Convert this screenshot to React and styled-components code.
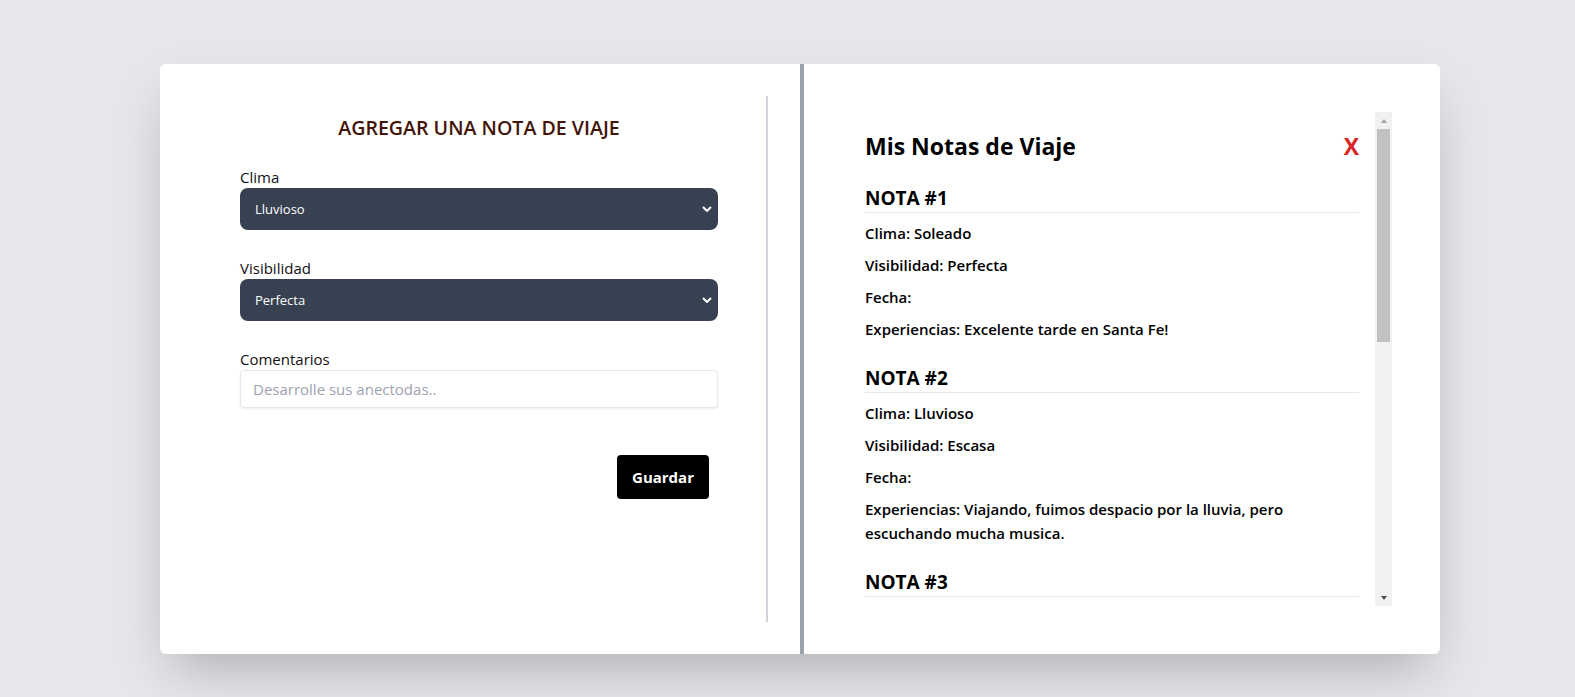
import React from 'react';
import styled, { createGlobalStyle } from 'styled-components';

const GlobalStyle = createGlobalStyle`
  * {
    box-sizing: border-box;
  }
  body {
    margin: 0;
    background-color: #e5e7eb;
    font-family: "Open Sans", "Noto Sans", sans-serif;
    color: #111827;
  }
`

const Page = styled.div`
  padding: 64px 0 0 160px;
  min-height: 697px;
`

const Card = styled.div`
  width: 1280px;
  height: 590px;
  display: grid;
  grid-template-columns: 640px 640px;
  background-color: white;
  border-radius: 6px;
  box-shadow: 0 25px 50px -12px rgba(0, 0, 0, 0.25);
`

const LeftPanel = styled.div`
  padding: 32px;
`

const FormBox = styled.form`
  height: 100%;
  border-right: 2px solid #d1d5db;
  padding: 18px 48px 0 48px;
`

const FormTitle = styled.h2`
  margin: 0 0 24px 0;
  text-align: center;
  font-size: 19.6px;
  line-height: 28px;
  font-weight: 600;
  color: #431407;
`

const Field = styled.div`
  display: flex;
  flex-direction: column;
  margin-bottom: 27px;
`

const Label = styled.label`
  font-size: 15px;
  line-height: 22px;
  color: #111;
`

const SelectWrap = styled.div`
  position: relative;
`

const Select = styled.select`
  appearance: none;
  width: 100%;
  height: 42px;
  padding: 0 15px;
  border: none;
  border-radius: 8px;
  background-color: #374151;
  color: white;
  font-family: inherit;
  font-size: 13px;
  outline: none;
`

const Chevron = styled.svg`
  position: absolute;
  right: 6px;
  top: 50%;
  transform: translateY(-50%);
  pointer-events: none;
`

const TextInput = styled.input`
  height: 38px;
  padding: 0 12px;
  border: 1px solid #e5e7eb;
  border-radius: 4px;
  box-shadow: 0 1px 2px rgba(0, 0, 0, 0.08);
  font-family: inherit;
  font-size: 15px;
  outline: none;
  &::placeholder {
    color: #9ca3af;
  }
`

const Actions = styled.div`
  display: flex;
  justify-content: flex-end;
  padding: 20px 9px 0 0;
`

const SaveButton = styled.button`
  width: 92px;
  height: 44px;
  border: none;
  border-radius: 4px;
  background-color: black;
  color: white;
  font-family: inherit;
  font-size: 15px;
  font-weight: 700;
  cursor: pointer;
`

const RightPanel = styled.div`
  border-left: 4px solid #9ca3af;
  padding: 48px;
  min-height: 0;
`

const NotesBox = styled.div`
  height: 494px;
  display: flex;
`

const NotesViewport = styled.div`
  flex: 1;
  overflow: hidden;
  padding: 18px 16px 0 13px;
`

const ScrollBar = styled.div`
  width: 17px;
  display: flex;
  flex-direction: column;
  background-color: #f1f1f1;
`

const ScrollButton = styled.div`
  height: 17px;
  display: flex;
  align-items: center;
  justify-content: center;
`

const Arrow = styled.span`
  width: 0;
  height: 0;
  border-left: 3.5px solid transparent;
  border-right: 3.5px solid transparent;
  ${props => props.down
    ? `border-top: 4px solid ${props.color};`
    : `border-bottom: 4px solid ${props.color};`}
`

const Track = styled.div`
  flex: 1;
  padding: 0 2px;
`

const Thumb = styled.div`
  height: 213px;
  background-color: #c1c1c1;
`

const NotesHeader = styled.div`
  display: flex;
  justify-content: space-between;
  align-items: center;
  margin-bottom: 23px;
`

const NotesTitle = styled.h1`
  margin: 0;
  font-size: 23px;
  line-height: 32px;
  font-weight: 700;
  color: black;
`

const CloseButton = styled.span`
  font-size: 23px;
  line-height: 32px;
  font-weight: 700;
  color: #dc2626;
  cursor: pointer;
`

const Note = styled.div`
  margin-bottom: 24px;
`

const NoteTitle = styled.h3`
  margin: 0;
  font-size: 19px;
  line-height: 27px;
  font-weight: 700;
  color: black;
  border-bottom: 1px solid #e5e7eb;
`

const NoteLine = styled.p`
  margin: 8px 0 0 0;
  font-size: 15px;
  line-height: 24px;
  font-weight: 600;
  color: black;
`

const notes = [
  { clima: 'Soleado', visibilidad: 'Perfecta', experiencias: 'Excelente tarde en Santa Fe!' },
  { clima: 'Lluvioso', visibilidad: 'Escasa', experiencias: 'Viajando, fuimos despacio por la lluvia, pero escuchando mucha musica.' },
  { clima: 'Nublado', visibilidad: 'Buena', experiencias: 'Mucho viento en la ruta.' },
];

const App = () => {
  return (
    <>
      <GlobalStyle />
      <Page>
        <Card>
          <LeftPanel>
            <FormBox onSubmit={(e) => e.preventDefault()}>
              <FormTitle>AGREGAR UNA NOTA DE VIAJE</FormTitle>
              <Field>
                <Label>Clima</Label>
                <SelectWrap>
                  <Select defaultValue="Lluvioso">
                    <option>Soleado</option>
                    <option>Lluvioso</option>
                    <option>Nublado</option>
                    <option>Ventoso</option>
                  </Select>
                  <Chevron width="10" height="6" viewBox="0 0 10 6">
                    <path d="M1 1 L5 5 L9 1" fill="none" stroke="white" strokeWidth="2" />
                  </Chevron>
                </SelectWrap>
              </Field>
              <Field>
                <Label>Visibilidad</Label>
                <SelectWrap>
                  <Select defaultValue="Perfecta">
                    <option>Perfecta</option>
                    <option>Buena</option>
                    <option>Escasa</option>
                  </Select>
                  <Chevron width="10" height="6" viewBox="0 0 10 6">
                    <path d="M1 1 L5 5 L9 1" fill="none" stroke="white" strokeWidth="2" />
                  </Chevron>
                </SelectWrap>
              </Field>
              <Field>
                <Label>Comentarios</Label>
                <TextInput placeholder="Desarrolle sus anectodas.." />
              </Field>
              <Actions>
                <SaveButton type="submit">Guardar</SaveButton>
              </Actions>
            </FormBox>
          </LeftPanel>
          <RightPanel>
            <NotesBox>
              <NotesViewport>
                <NotesHeader>
                  <NotesTitle>Mis Notas de Viaje</NotesTitle>
                  <CloseButton>X</CloseButton>
                </NotesHeader>
                {notes.map((note, i) => (
                  <Note key={i}>
                    <NoteTitle>NOTA #{i + 1}</NoteTitle>
                    <NoteLine>Clima: {note.clima}</NoteLine>
                    <NoteLine>Visibilidad: {note.visibilidad}</NoteLine>
                    <NoteLine>Fecha:</NoteLine>
                    <NoteLine>Experiencias: {note.experiencias}</NoteLine>
                  </Note>
                ))}
              </NotesViewport>
              <ScrollBar>
                <ScrollButton><Arrow color="#a3a3a3" /></ScrollButton>
                <Track><Thumb /></Track>
                <ScrollButton><Arrow down color="#505050" /></ScrollButton>
              </ScrollBar>
            </NotesBox>
          </RightPanel>
        </Card>
      </Page>
    </>
  );
}

export default App;
